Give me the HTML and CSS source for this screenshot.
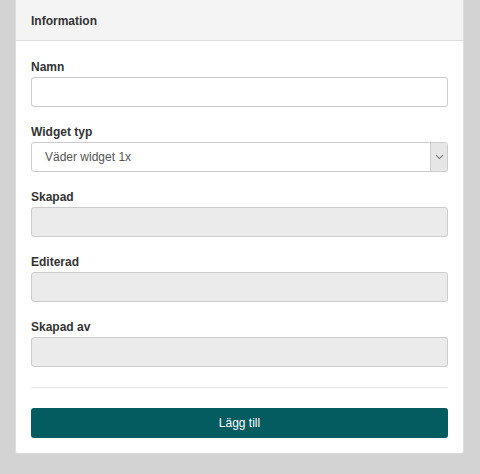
FILE: index.html
```html
<!DOCTYPE html>
<html lang="sv">
<head>
<meta charset="utf-8">
<title>Information</title>
<link rel="stylesheet" href="styles.css">
</head>
<body>
<div class="card">
  <div class="card-header">Information</div>
  <div class="card-body">
    <div class="group">
      <label class="label">Namn</label>
      <input class="field" type="text">
    </div>
    <div class="group">
      <label class="label">Widget typ</label>
      <div class="select">
        <span class="select-value">Väder widget 1x</span>
        <span class="select-arrow">
          <svg width="9" height="6" viewBox="0 0 9 6"><path d="M1 1.2 L4.5 4.6 L8 1.2" fill="none" stroke="#777" stroke-width="1.1"/></svg>
        </span>
      </div>
    </div>
    <div class="group">
      <label class="label">Skapad</label>
      <input class="field disabled" type="text" disabled>
    </div>
    <div class="group">
      <label class="label">Editerad</label>
      <input class="field disabled" type="text" disabled>
    </div>
    <div class="group last">
      <label class="label">Skapad av</label>
      <input class="field disabled" type="text" disabled>
    </div>
    <hr class="divider">
    <button class="btn">Lägg till</button>
  </div>
</div>
</body>
</html>
```
FILE: styles.css
```css
html, body {
  margin: 0;
  padding: 0;
  background: #d3d3d3;
  font-family: "Liberation Sans", Arial, sans-serif;
  font-size: 12px;
  color: #333;
}
.card {
  margin-left: 15px;
  width: 449px;
  box-sizing: border-box;
  background: #fff;
  border: 1px solid #dcdcdc;
  border-top: none;
  border-radius: 0 0 3px 3px;
}
.card-header {
  height: 41px;
  box-sizing: border-box;
  background: #f4f4f4;
  border-bottom: 1px solid #dddddd;
  padding: 14px 15px 0 15px;
  font-weight: bold;
  line-height: 15px;
}
.card-body {
  padding: 19px 15px 15px 15px;
}
.group {
  display: flex;
  flex-direction: column;
  margin-bottom: 18px;
}
.group.last {
  margin-bottom: 20px;
}
.label {
  font-weight: bold;
  line-height: 15px;
  margin-bottom: 2px;
}
.field {
  display: block;
  height: 30px;
  box-sizing: border-box;
  width: 100%;
  border: 1px solid #cccccc;
  border-radius: 3px;
  background: #fff;
  margin: 0;
  padding: 0 12px;
  font: inherit;
}
.field.disabled {
  background: #ebebeb;
}
.select {
  display: flex;
  height: 30px;
  box-sizing: border-box;
  border: 1px solid #cccccc;
  border-radius: 3px;
  overflow: hidden;
}
.select-value {
  flex: 1;
  padding-left: 13px;
  line-height: 28px;
  color: #555;
}
.select-arrow {
  width: 16px;
  background: #e6e6e6;
  border-left: 1px solid #cccccc;
  display: flex;
  align-items: center;
  justify-content: center;
}
.divider {
  border: none;
  border-top: 1px solid #e6e6e6;
  margin: 0 0 20px 0;
}
.btn {
  display: block;
  width: 100%;
  height: 30px;
  border: none;
  border-radius: 3px;
  background: #045b60;
  color: #fff;
  font: inherit;
  padding: 0;
}
```
